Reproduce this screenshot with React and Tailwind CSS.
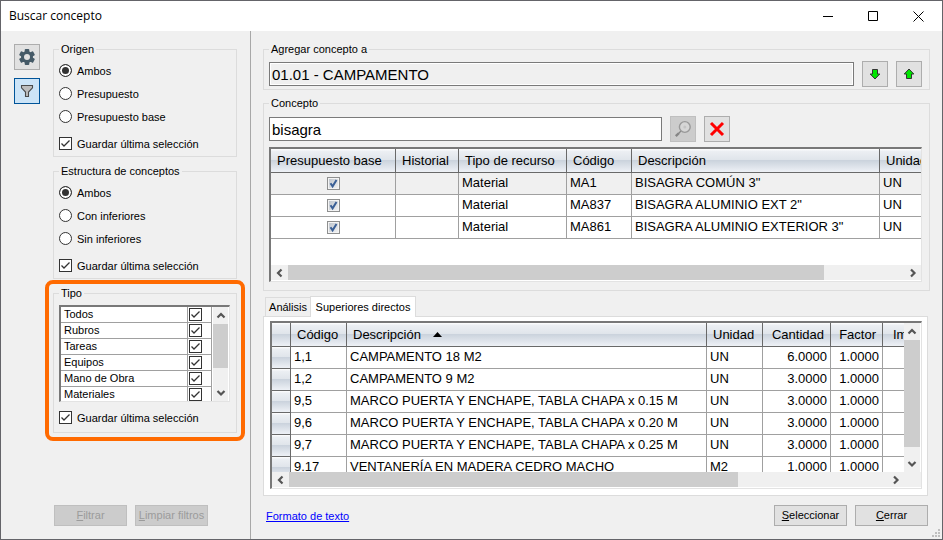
import React from "react";
import clsx from "clsx";

const resources = [
  { code: "MA1", desc: 'BISAGRA COMÚN 3"' },
  { code: "MA837", desc: 'BISAGRA ALUMINIO EXT 2"' },
  { code: "MA861", desc: 'BISAGRA ALUMINIO EXTERIOR 3"' },
];

const parents = [
  { code: "1,1", desc: "CAMPAMENTO 18 M2", unit: "UN", qty: "6.0000" },
  { code: "1,2", desc: "CAMPAMENTO 9 M2", unit: "UN", qty: "3.0000" },
  { code: "9,5", desc: "MARCO PUERTA Y ENCHAPE, TABLA CHAPA x 0.15 M", unit: "UN", qty: "3.0000" },
  { code: "9,6", desc: "MARCO PUERTA Y ENCHAPE, TABLA CHAPA x 0.20 M", unit: "UN", qty: "3.0000" },
  { code: "9,7", desc: "MARCO PUERTA Y ENCHAPE, TABLA CHAPA x 0.25 M", unit: "UN", qty: "3.0000" },
  { code: "9.17", desc: "VENTANERÍA EN MADERA CEDRO MACHO", unit: "M2", qty: "1.0000" },
];

const types = ["Todos", "Rubros", "Tareas", "Equipos", "Mano de Obra", "Materiales"];

const gridFrame =
  "border-t-2 border-l-2 border-r border-b border-t-[#787878] border-l-[#787878] border-r-[#e3e3e3] border-b-[#e3e3e3] bg-white";
const headCell =
  "h-6 border-r border-b border-[#696969] bg-[linear-gradient(#ffffff,#eceff3_10%,#e0e5eb_46%,#cbd3dd_50%,#eef1f6)] px-1.5 text-left font-normal whitespace-nowrap";
const bodyCell = "h-[22px] border-r border-b border-[#a0a0a0] px-[3px] leading-5 whitespace-nowrap align-top";

const Chevron = ({ dir }) => {
  const d = {
    up: "M1.5 6.5 5 3l3.5 3.5",
    down: "M1.5 3 5 6.5 8.5 3",
    left: "M6.5 1.5 3 5l3.5 3.5",
    right: "M3 1.5 6.5 5 3 8.5",
  }[dir];
  return (
    <svg width="10" height="10" viewBox="0 0 10 10" fill="none" stroke="#555" strokeWidth="2.2" aria-hidden="true">
      <path d={d} />
    </svg>
  );
};

const ScrollButton = ({ dir, label }) => (
  <button
    aria-label={label}
    className={clsx(
      "flex shrink-0 items-center justify-center",
      dir === "up" || dir === "down" ? "h-[17px] w-full" : "h-full w-[17px]"
    )}
  >
    <Chevron dir={dir} />
  </button>
);

const CheckBox = ({ label, ...rest }) => (
  <span className="relative block size-[13px] shrink-0">
    <input
      type="checkbox"
      defaultChecked
      aria-label={label}
      className="peer block size-[13px] appearance-none border border-[#333] bg-white"
      {...rest}
    />
    <svg
      className="pointer-events-none absolute inset-0 hidden peer-checked:block"
      viewBox="0 0 13 13"
      fill="none"
      stroke="#333"
      strokeWidth="1.3"
      aria-hidden="true"
    >
      <path d="M2.5 6.5 5 9l5.5-5.5" />
    </svg>
  </span>
);

// Bluish checkbox used inside the results grid
const GridCheckBox = ({ label }) => (
  <span className="relative mx-auto mt-1 block size-[13px]">
    <input
      type="checkbox"
      defaultChecked
      aria-label={label}
      className="peer block size-[13px] appearance-none border border-[#8e8f8f] bg-[linear-gradient(135deg,#b9c0c9,#f6f6f6)] shadow-[inset_0_0_0_1px_#f4f4f4]"
    />
    <svg
      className="pointer-events-none absolute inset-0 hidden peer-checked:block"
      viewBox="0 0 13 13"
      fill="none"
      stroke="#3a5f96"
      strokeWidth="2"
      aria-hidden="true"
    >
      <path d="M3.5 6.2 5.6 9.3 9.5 3" />
    </svg>
  </span>
);

const Radio = ({ name, label, checked }) => (
  <label className="flex h-[23px] items-center gap-[5px]">
    <input
      type="radio"
      name={name}
      defaultChecked={checked}
      className="size-[13px] shrink-0 appearance-none rounded-full border border-[#333] bg-white checked:bg-[#333] checked:shadow-[inset_0_0_0_2px_#fff]"
    />
    {label}
  </label>
);

const SaveSelection = () => (
  <label className="mt-1 flex h-[23px] items-center gap-[5px]">
    <CheckBox />
    Guardar última selección
  </label>
);

const Group = ({ title, className, children }) => (
  <fieldset className={clsx("min-w-0 border border-[#dcdcdc] pl-[5px]", className)}>
    <legend className="px-0.5 leading-[14px]">{title}</legend>
    {children}
  </fieldset>
);

const IconButton = ({ label, className, children, ...rest }) => (
  <button
    aria-label={label}
    className={clsx("flex size-[26px] shrink-0 items-center justify-center border", className)}
    {...rest}
  >
    {children}
  </button>
);

const PushButton = ({ children, disabled }) => (
  <button
    disabled={disabled}
    className={clsx(
      "h-[21px] w-[73px] border text-center leading-[19px] whitespace-nowrap",
      disabled ? "border-[#bfbfbf] bg-[#cccccc] text-[#9b9b9b]" : "border-[#adadad] bg-[#e1e1e1]"
    )}
  >
    {children}
  </button>
);

const Arrow = ({ down }) => (
  <svg className={clsx(down && "rotate-180")} width="12" height="12" viewBox="0 0 12 12" aria-hidden="true">
    <path d="M6 1 10.8 6H8.5v4.5h-5V6H1.2z" fill="#00e600" stroke="#333" strokeWidth="1" />
  </svg>
);

const TitleBar = () => (
  <header className="flex h-[30px] items-center bg-white pl-2">
    <h1 className="flex-1 font-['Open_Sans',sans-serif] text-xs">Buscar concepto</h1>
    <button aria-label="Minimizar" className="flex h-full w-[45px] items-center justify-center">
      <svg width="10" height="10" stroke="#000" fill="none" aria-hidden="true">
        <path d="M0 5.5h10" />
      </svg>
    </button>
    <button aria-label="Maximizar" className="flex h-full w-[45px] items-center justify-center">
      <svg width="10" height="10" stroke="#000" fill="none" aria-hidden="true">
        <path d="M.5.5h9v9h-9z" />
      </svg>
    </button>
    <button aria-label="Cerrar ventana" className="flex h-full w-[47px] items-center justify-center">
      <svg width="11" height="11" stroke="#000" fill="none" aria-hidden="true">
        <path d="M.5.5l10 10M10.5.5l-10 10" />
      </svg>
    </button>
  </header>
);

const TypeGroup = () => (
  <div className="relative">
    <Group title="Tipo" className="pt-[5px] pr-1.5 pb-[3px]">
      <div className={clsx("flex h-[97px] overflow-hidden", gridFrame)}>
        <table className="w-0 flex-1 table-fixed border-separate border-spacing-0 self-start">
          <tbody>
            {types.map((type) => (
              <tr key={type}>
                <td className="h-4 border-r border-b border-[#a0a0a0] px-[3px] leading-[15px]">{type}</td>
                <td className="h-4 w-6 border-r border-b border-[#a0a0a0] pl-px">
                  <CheckBox label={type} />
                </td>
              </tr>
            ))}
          </tbody>
        </table>
        <div className="mx-px flex w-[15px] flex-col bg-[#f0f0f0]">
          <ScrollButton dir="up" label="Subir" />
          <div className="flex-1">
            <div className="h-11 bg-[#cdcdcd]" />
          </div>
          <ScrollButton dir="down" label="Bajar" />
        </div>
      </div>
      <SaveSelection />
    </Group>
    {/* Highlight frame */}
    <div className="pointer-events-none absolute -inset-x-2 -top-1.5 -bottom-2 rounded-lg border-4 border-[#ff6a00]" />
  </div>
);

const Sidebar = () => (
  <aside className="flex w-[250px] shrink-0 gap-[13px] border-r border-[#a8a8a8] px-[13px] pt-[11px] pb-[13px]">
    <div className="flex flex-col gap-2 pt-0.5">
      <IconButton label="Configuración" className="border-[#adadad] bg-[#e1e1e1]">
        <svg width="16" height="16" viewBox="0 0 16 16" aria-hidden="true">
          <g fill="#455a67">
            <circle cx="8" cy="8" r="6" />
            <rect x="5.7" y="0" width="4.6" height="16" rx="1" />
            <rect x="5.7" y="0" width="4.6" height="16" rx="1" transform="rotate(60 8 8)" />
            <rect x="5.7" y="0" width="4.6" height="16" rx="1" transform="rotate(120 8 8)" />
          </g>
          <circle cx="8" cy="8" r="3" fill="#e1e1e1" />
        </svg>
      </IconButton>
      <IconButton label="Filtros" className="border-[#005499] bg-[#cce4f7]">
        <svg width="14" height="14" viewBox="0 0 14 14" aria-hidden="true">
          <path d="M1.5 1.5h11v2.3L8.5 8v4.5h-3V8l-4-4.2z" fill="#bdbdbd" stroke="#4a4a4a" strokeWidth="1.1" />
        </svg>
      </IconButton>
    </div>
    <div className="flex min-w-0 flex-1 flex-col gap-[7px]">
      <Group title="Origen" className="pt-[3px] pb-px">
        <Radio name="origen" label="Ambos" checked />
        <Radio name="origen" label="Presupuesto" />
        <Radio name="origen" label="Presupuesto base" />
        <SaveSelection />
      </Group>
      <Group title="Estructura de conceptos" className="pt-[3px] pb-px">
        <Radio name="estructura" label="Ambos" checked />
        <Radio name="estructura" label="Con inferiores" />
        <Radio name="estructura" label="Sin inferiores" />
        <SaveSelection />
      </Group>
      <TypeGroup />
      <div className="mt-auto flex gap-2 pl-px">
        <PushButton disabled>
          <u>F</u>iltrar
        </PushButton>
        <PushButton disabled>
          <u>L</u>impiar filtros
        </PushButton>
      </div>
    </div>
  </aside>
);

const ResourceGrid = () => (
  <div className={clsx("mt-[5px] flex h-[135px] flex-col overflow-hidden text-[13px]", gridFrame)}>
    <div className="min-h-0 flex-1 overflow-hidden">
      <table className="w-[671px] table-fixed border-separate border-spacing-0">
        <thead>
          <tr>
            <th className={clsx(headCell, "w-[125px]")}>Presupuesto base</th>
            <th className={clsx(headCell, "w-[63px]")}>Historial</th>
            <th className={clsx(headCell, "w-[108px]")}>Tipo de recurso</th>
            <th className={clsx(headCell, "w-[65px]")}>Código</th>
            <th className={clsx(headCell, "w-[248px]")}>Descripción</th>
            <th className={headCell}>Unidad</th>
          </tr>
        </thead>
        <tbody>
          {resources.map((row) => (
            <tr key={row.code} className="first:bg-[#f0f0f0]">
              <td className={bodyCell}>
                <GridCheckBox label={row.desc} />
              </td>
              <td className={bodyCell} />
              <td className={bodyCell}>Material</td>
              <td className={bodyCell}>{row.code}</td>
              <td className={bodyCell}>{row.desc}</td>
              <td className={bodyCell}>UN</td>
            </tr>
          ))}
        </tbody>
      </table>
    </div>
    <div className="mb-px flex h-[15px] bg-[#f0f0f0]">
      <ScrollButton dir="left" label="Izquierda" />
      <div className="flex-1">
        <div className="h-full w-[87%] bg-[#cdcdcd]" />
      </div>
      <ScrollButton dir="right" label="Derecha" />
    </div>
  </div>
);

const ParentsGrid = () => (
  <div className={clsx("h-[168px] overflow-hidden text-[13px]", gridFrame)}>
    <div className="flex h-[149px]">
      <div className="min-w-0 flex-1 overflow-hidden">
        <table className="w-[691px] table-fixed border-separate border-spacing-0">
          <thead>
            <tr>
              <th className={clsx(headCell, "w-[19px]")} />
              <th className={clsx(headCell, "w-14")}>Código</th>
              <th className={clsx(headCell, "w-[360px]")}>
                <span className="flex items-center gap-3">
                  Descripción
                  <svg width="9" height="5" viewBox="0 0 9 5" aria-hidden="true">
                    <path d="M0 5 4.5 0 9 5z" />
                  </svg>
                </span>
              </th>
              <th className={clsx(headCell, "w-14")}>Unidad</th>
              <th className={clsx(headCell, "w-[68px] text-right!")}>Cantidad</th>
              <th className={clsx(headCell, "w-[52px] text-right!")}>Factor</th>
              <th className={clsx(headCell, "pl-[10px]")}>Importe</th>
            </tr>
          </thead>
          <tbody>
            {parents.map((row) => (
              <tr key={row.code}>
                <td className="h-[22px] border-r border-b border-[#696969] bg-[linear-gradient(#ffffff,#eceff3_10%,#e0e5eb_46%,#cbd3dd_50%,#eef1f6)]" />
                <td className={bodyCell}>{row.code}</td>
                <td className={bodyCell}>{row.desc}</td>
                <td className={bodyCell}>{row.unit}</td>
                <td className={clsx(bodyCell, "text-right")}>{row.qty}</td>
                <td className={clsx(bodyCell, "text-right")}>1.0000</td>
                <td className={bodyCell} />
              </tr>
            ))}
          </tbody>
        </table>
      </div>
      <div className="mr-px flex w-4 flex-col bg-[#f0f0f0]">
        <ScrollButton dir="up" label="Subir" />
        <div className="flex-1">
          <div className="h-[107px] bg-[#cdcdcd]" />
        </div>
        <ScrollButton dir="down" label="Bajar" />
      </div>
    </div>
    <div className="flex h-[15px] bg-[#f0f0f0] pr-[17px]">
      <ScrollButton dir="left" label="Izquierda" />
      <div className="flex-1">
        <div className="h-full w-3/4 bg-[#cdcdcd]" />
      </div>
      <ScrollButton dir="right" label="Derecha" />
    </div>
  </div>
);

const MainPanel = () => (
  <main className="flex min-w-0 flex-1 flex-col px-3 pt-[11px] pb-[13px]">
    <Group title="Agregar concepto a" className="pt-[5px] pr-[7px] pb-0.5">
      <div className="flex items-center gap-2">
        <input
          aria-label="Agregar concepto a"
          readOnly
          defaultValue="01.01 - CAMPAMENTO"
          className="h-6 min-w-0 flex-1 border border-[#7a7a7a] bg-[#f0f0f0] px-0.5 text-[15px] shadow-[inset_0_0_0_1px_#fff]"
        />
        <IconButton label="Mover abajo" className="border-[#adadad] bg-[#e1e1e1]">
          <Arrow down />
        </IconButton>
        <IconButton label="Mover arriba" className="border-[#adadad] bg-[#e1e1e1]">
          <Arrow />
        </IconButton>
      </div>
    </Group>
    <Group title="Concepto" className="mt-1.5 pt-1.5 pr-[7px] pb-2">
      <div className="flex items-center gap-2">
        <input
          aria-label="Concepto"
          defaultValue="bisagra"
          className="h-6 w-[393px] border border-[#7a7a7a] bg-white px-0.5 text-[15px]"
        />
        <IconButton label="Buscar" disabled className="border-[#bfbfbf] bg-[#cccccc]">
          <svg width="18" height="18" viewBox="0 0 18 18" fill="none" aria-hidden="true">
            <path d="M1.8 16.2 5 13" stroke="#858585" strokeWidth="2.4" />
            <path d="M5 13l2-2" stroke="#858585" strokeWidth="1.2" />
            <circle cx="10.8" cy="7" r="5.4" fill="#d6d6d6" stroke="#999" strokeWidth="1.4" />
            <circle cx="10.8" cy="7" r="1.5" fill="#c4c4c4" />
          </svg>
        </IconButton>
        <IconButton label="Borrar" className="border-[#adadad] bg-[#e1e1e1]">
          <svg width="16" height="16" viewBox="0 0 16 16" stroke="#f00" strokeWidth="3" aria-hidden="true">
            <path d="M2 2l12 12M14 2 2 14" />
          </svg>
        </IconButton>
      </div>
      <ResourceGrid />
    </Group>

    <div className="mt-[5px] mr-0.5">
      <div role="tablist" className="-mb-px flex items-end pl-0.5">
        <button role="tab" aria-selected="false" className="mb-px h-[19px] w-[45px] border border-r-0 border-b-0 border-[#dcdcdc]">
          Análisis
        </button>
        <button
          role="tab"
          aria-selected="true"
          className="relative h-[21px] w-[106px] border border-b-0 border-[#dcdcdc] bg-white whitespace-nowrap"
        >
          Superiores directos
        </button>
      </div>
      <div role="tabpanel" className="border border-[#dcdcdc] bg-white pt-1 pr-[5px] pb-1.5 pl-1.5">
        <ParentsGrid />
      </div>
    </div>

    <footer className="mt-auto mr-0.5 flex items-center gap-2 pl-[3px]">
      <a href="#formato" className="text-[#0000ff] underline">
        Formato de texto
      </a>
      <div className="flex-1" />
      <PushButton>
        <u>S</u>eleccionar
      </PushButton>
      <PushButton>
        <u>C</u>errar
      </PushButton>
    </footer>
  </main>
);

const App = () => {
  return (
    <div className="relative flex min-h-screen flex-col border border-[#646469] bg-[#f0f0f0] font-['Liberation_Sans',Arial,sans-serif] text-[11px] leading-[14px] text-black">
      <TitleBar />
      <div className="flex flex-1">
        <Sidebar />
        <MainPanel />
      </div>
      {/* Resize grip */}
      <svg className="absolute right-0.5 bottom-0.5" width="8" height="8" fill="#bfbfbf" aria-hidden="true">
        <path d="M6 0h2v2H6zM3 3h2v2H3zM6 3h2v2H6zM0 6h2v2H0zM3 6h2v2H3zM6 6h2v2H6z" />
      </svg>
    </div>
  );
};

export default App;
